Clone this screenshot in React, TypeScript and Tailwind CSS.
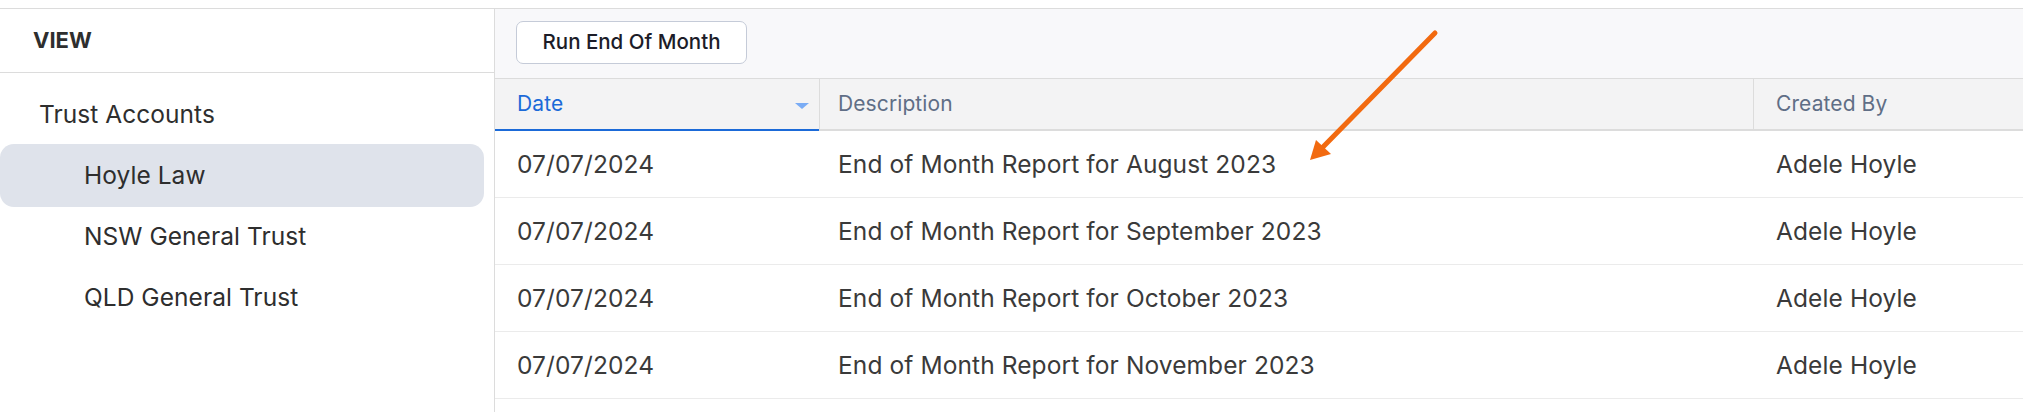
import React from 'react';

const accounts = ['Hoyle Law', 'NSW General Trust', 'QLD General Trust'];

const reports = [
  { date: '07/07/2024', description: 'End of Month Report for August 2023', createdBy: 'Adele Hoyle' },
  { date: '07/07/2024', description: 'End of Month Report for September 2023', createdBy: 'Adele Hoyle' },
  { date: '07/07/2024', description: 'End of Month Report for October 2023', createdBy: 'Adele Hoyle' },
  { date: '07/07/2024', description: 'End of Month Report for November 2023', createdBy: 'Adele Hoyle' },
];

function Sidebar() {
  return (
    <aside className="w-[495px] shrink-0 border-r border-[#dcdcdc] flex flex-col">
      {/* View header */}
      <div className="h-[64px] border-b border-[#dcdcdc] flex items-center pl-[33px]">
        <span className="text-[22px] font-bold text-[#2e2e2e]">VIEW</span>
      </div>

      <nav className="pt-[11px] pr-[10px] flex flex-col text-[24.5px] tracking-[0.05px] text-[#2e2e2e]">
        <div className="h-[61px] flex items-center pl-[39px]">Trust Accounts</div>
        {accounts.map((name, i) => (
          <div
            key={name}
            className={`flex items-center pl-[84px] rounded-[14px] ${
              i === 0 ? 'bg-[#dfe3eb] h-[63px] -my-px' : 'h-[61px]'
            }`}
          >
            {name}
          </div>
        ))}
      </nav>
    </aside>
  );
}

function ReportTable() {
  return (
    <div className="flex-1 flex flex-col">
      {/* Toolbar */}
      <div className="h-[70px] bg-[#f8f8fa] border-b border-[#dcdcdc] pl-[21px] pt-[12px]">
        <button className="h-[43px] w-[231px] rounded-[7px] border border-[#c5cbd8] bg-white text-[20.5px] font-medium text-[#1c1c28]">
          Run End Of Month
        </button>
      </div>

      {/* Column headers */}
      <div className="h-[52px] bg-[#f3f3f4] border-b-2 border-[#dcdcdc] flex text-[21px] tracking-[0.1px]">
        <div className="w-[325px] border-r border-[#dcdcdc] relative flex items-center pl-[22px] text-[#1b6ad8]">
          Date
          <span className="absolute right-[10px] top-[24px] w-0 h-0 border-l-[7px] border-r-[7px] border-t-[6px] border-l-transparent border-r-transparent border-t-[#7aacf5]" />
          <span className="absolute left-0 right-0 -bottom-[2px] h-[2px] bg-[#1b6ad8]" />
        </div>
        <div className="w-[934px] border-r border-[#dcdcdc] flex items-center pl-[18px] text-[#5f6e86]">
          Description
        </div>
        <div className="flex-1 flex items-center pl-[22px] text-[#5f6e86]">Created By</div>
      </div>

      {/* Rows */}
      {reports.map((r) => (
        <div
          key={r.description}
          className="h-[67px] border-b border-[#ebebeb] flex items-center text-[24.5px] tracking-[0.1px] text-[#3a3a3a]"
        >
          <div className="w-[325px] pl-[22px]">{r.date}</div>
          <div className="w-[934px] pl-[18px]">{r.description}</div>
          <div className="flex-1 pl-[22px]">{r.createdBy}</div>
        </div>
      ))}
    </div>
  );
}

export default function App() {
  return (
    <div className="relative w-[2023px] h-[412px] bg-white overflow-hidden font-['Inter',sans-serif]">
      <div className="h-[8px]" />
      <div className="flex h-[404px] border-t border-[#dcdcdc]">
        <Sidebar />
        <ReportTable />
      </div>

      {/* Annotation arrow */}
      <svg className="absolute left-0 top-0 pointer-events-none" width="2023" height="412">
        <line x1="1435" y1="33" x2="1322" y2="148" stroke="#f26a10" strokeWidth="5" strokeLinecap="round" />
        <polygon points="1310,160 1331,154 1316,140" fill="#f26a10" />
      </svg>
    </div>
  );
}
